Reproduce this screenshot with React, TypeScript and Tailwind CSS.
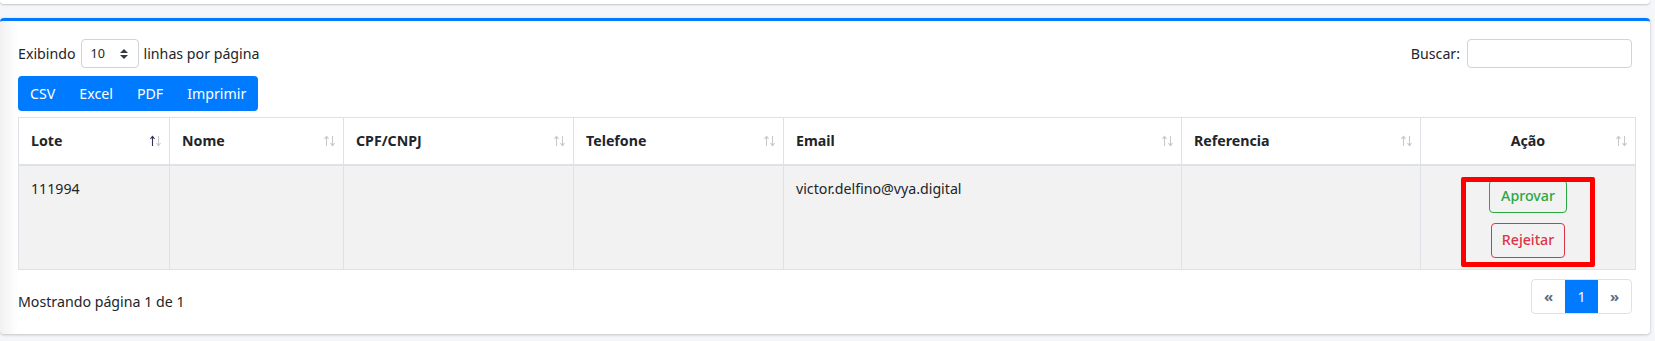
const columns = [
  { label: 'Lote', width: 'w-[151px]', active: true },
  { label: 'Nome', width: 'w-[174px]' },
  { label: 'CPF/CNPJ', width: 'w-[230px]' },
  { label: 'Telefone', width: 'w-[210px]' },
  { label: 'Email', width: 'w-[398px]' },
  { label: 'Referencia', width: 'w-[239px]' },
  { label: 'Ação', width: 'w-[215px]', center: true },
];

const row = ['111994', '', '', '', 'victor.delfino@vya.digital', ''];

function SortIcon({ active }: { active?: boolean }) {
  return (
    <svg
      width="13"
      height="12"
      viewBox="0 0 13 12"
      fill="none"
      strokeWidth="1.1"
      className="absolute right-[7px] top-1/2 -translate-y-1/2"
    >
      <g stroke={active ? '#3a2d5a' : '#c6c8ca'}>
        <path d="M3.5 1.5 V11" />
        <path d="M1.5 3.8 L3.5 1.3 L5.5 3.8" />
      </g>
      <g stroke="#c6c8ca">
        <path d="M9.5 1 V10.5" />
        <path d="M7.5 8.2 L9.5 10.7 L11.5 8.2" />
      </g>
    </svg>
  );
}

export default function App() {
  return (
    <div className="min-h-[341px] bg-[#f4f6f9] font-['Segoe_UI','Noto_Sans',sans-serif] text-[14.2px] text-[#212529] overflow-hidden">
      {/* previous card bottom */}
      <div className="h-[4px] mr-[5px] bg-white rounded-b-[4px] shadow-[0_1px_2px_rgba(0,0,0,0.2)]" />

      {/* Card */}
      <div className="mt-[14px] mr-[5px] bg-[linear-gradient(to_right,#f1f1f1,#ffffff_18px)] border-t-[3px] border-[#007bff] rounded-[4px] shadow-[0_0_1px_rgba(0,0,0,0.15),0_1px_3px_rgba(0,0,0,0.2)] px-[18px] pt-[18px] pb-[20px]">
        {/* length + search */}
        <div className="flex items-center justify-between h-[29px]">
          <div className="flex items-center gap-[5px]">
            <span>Exibindo</span>
            <div className="flex items-center justify-between w-[58px] h-[29px] border border-[#ced4da] rounded-[4px] bg-white pl-[9px] pr-[10px] text-[12.6px]">
              <span className="pt-[2px]">10</span>
              <svg width="8" height="10" viewBox="0 0 8 10" className="fill-[#343a40]">
                <path d="M4 0 L8 4 H0 Z" />
                <path d="M4 10 L8 6 H0 Z" />
              </svg>
            </div>
            <span>linhas por página</span>
          </div>
          <div className="flex items-center gap-[7px]">
            <span>Buscar:</span>
            <div className="w-[165px] h-[29px] border border-[#ced4da] rounded-[4px] bg-white" />
          </div>
        </div>

        {/* export buttons */}
        <div className="mt-[8px] inline-flex h-[35px] bg-[#007bff] rounded-[4px] text-white">
          {['CSV', 'Excel', 'PDF', 'Imprimir'].map((b) => (
            <button key={b} className="px-[12px] leading-[35px]">
              {b}
            </button>
          ))}
        </div>

        {/* table */}
        <table className="mt-[6px] w-[1617px] border-collapse table-fixed">
          <thead>
            <tr className="h-[47px] bg-white">
              {columns.map((c) => (
                <th
                  key={c.label}
                  className={`${c.width} relative border border-[#dee2e6] border-b-2 px-[12px] font-bold ${c.center ? 'text-center' : 'text-left'}`}
                >
                  {c.label}
                  <SortIcon active={c.active} />
                </th>
              ))}
            </tr>
          </thead>
          <tbody>
            <tr className="h-[105px] bg-[#f2f2f2]">
              {row.map((v, i) => (
                <td key={i} className="border border-[#dee2e6] px-[12px] pt-[12px] align-top">
                  {v}
                </td>
              ))}
              <td className="border border-[#dee2e6] align-top">
                <div className="relative flex flex-col items-center pt-[14px] gap-[10px]">
                  <button className="h-[33px] px-[11px] border border-[#28a745] rounded-[4px] text-[#28a745] font-medium leading-none">
                    Aprovar
                  </button>
                  <button className="h-[35px] px-[10px] border border-[#dc3545] rounded-[4px] text-[#dc3545] font-medium leading-none">
                    Rejeitar
                  </button>
                  {/* annotation */}
                  <div className="absolute left-[40px] top-[11px] w-[134px] h-[90px] border-[5px] border-[#ff0000] rounded-[2px]" />
                </div>
              </td>
            </tr>
          </tbody>
        </table>

        {/* footer */}
        <div className="mt-[9px] flex items-start justify-between h-[35px]">
          <span className="pt-[12px]">Mostrando página 1 de 1</span>
          <div className="flex h-[35px] border border-[#dee2e6] rounded-[4px] overflow-hidden bg-white">
            <span className="w-[33px] flex items-center justify-center text-[#5a6e86] text-[15px] font-bold">«</span>
            <span className="w-[33px] flex items-center justify-center bg-[#007bff] text-white">1</span>
            <span className="w-[33px] flex items-center justify-center text-[#5a6e86] text-[15px] font-bold">»</span>
          </div>
        </div>
      </div>
    </div>
  );
}
